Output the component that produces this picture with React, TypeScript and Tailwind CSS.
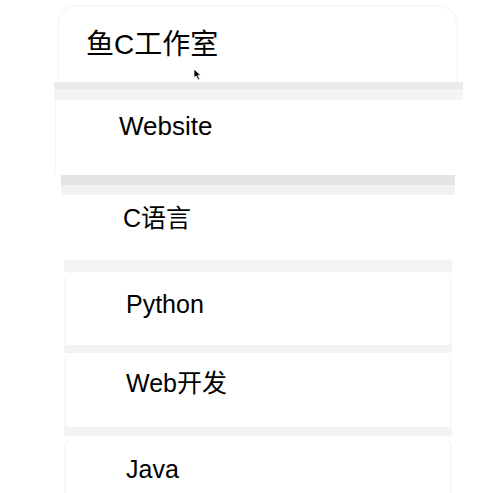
import React from "react";

const font = { fontFamily: '"Liberation Sans", "Noto Sans CJK SC", sans-serif' };

function Cursor() {
  return (
    <svg
      className="absolute left-[193px] top-[68px]"
      width="9"
      height="13"
      viewBox="0 0 9 13"
    >
      <path d="M1 1 L1 10 L3.2 8 L5 12 L6.6 11.2 L4.9 7.4 L8 7.4 Z" fill="#000" stroke="#fff" strokeWidth="0.8" />
    </svg>
  );
}

export default function App() {
  return (
    <div className="relative w-[480px] h-[493px] overflow-hidden bg-white text-black" style={font}>
      {/* header card */}
      <div className="ml-[57px] w-[401px] h-[77px] mt-[5px] rounded-t-[20px] border-x-2 border-t-2 border-[#f8f8f8] bg-white pl-[27px] pt-[23px]">
        <span className="text-[28px] leading-[30px]">鱼C工作室</span>
      </div>
      <div className="ml-[54px] w-[409px] h-[18px] flex flex-col">
        <div className="h-[7px] bg-[#eaeaea]" />
        <div className="flex-1 bg-[#f4f4f4]" />
      </div>

      {/* Website */}
      <div className="ml-[55px] w-[407px] h-[75px] bg-white border-l border-[#f6f6f6] pl-[63px] pt-[13px]">
        <span className="text-[26px] leading-[27px]">Website</span>
      </div>
      <div className="ml-[61px] w-[394px] h-[20px] flex flex-col">
        <div className="h-[10px] bg-[#e4e4e4]" />
        <div className="flex-1 bg-[#f2f2f2]" />
      </div>

      {/* C语言 */}
      <div className="ml-[61px] w-[394px] h-[65px] bg-white pl-[62px] pt-[10px]">
        <span className="text-[25px] leading-[26px]">C语言</span>
      </div>
      <div className="ml-[64px] w-[388px] h-[12px] bg-[#f3f3f3]" />

      {/* Python */}
      <div className="ml-[64px] w-[388px] h-[73px] bg-white rounded-t-[10px] border-x-2 border-[#f7f7f7] pl-[60px] pt-[19px]">
        <span className="text-[25px] leading-[26px]">Python</span>
      </div>
      <div className="ml-[64px] w-[388px] h-[8px] bg-[#f3f3f3]" />

      {/* Web开发 */}
      <div className="ml-[64px] w-[388px] h-[74px] bg-white rounded-t-[10px] border-x-2 border-[#f7f7f7] pl-[60px] pt-[17px]">
        <span className="text-[25px] leading-[26px]">Web开发</span>
      </div>
      <div className="ml-[64px] w-[388px] h-[9px] bg-[#f3f3f3]" />

      {/* Java */}
      <div className="ml-[64px] w-[388px] h-[60px] bg-white rounded-t-[12px] border-x-2 border-[#f7f7f7] pl-[60px] pt-[20px]">
        <span className="text-[25px] leading-[26px]">Java</span>
      </div>

      <Cursor />
    </div>
  );
}
